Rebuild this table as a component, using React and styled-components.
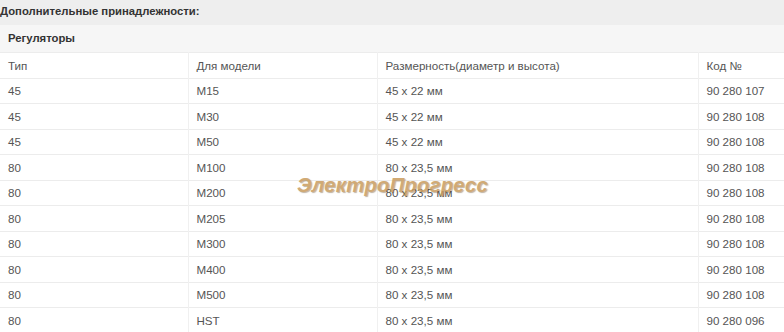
import styled, { createGlobalStyle } from 'styled-components'

const rows = [
  ['45', 'M15', '45 x 22 мм', '90 280 107'],
  ['45', 'M30', '45 x 22 мм', '90 280 108'],
  ['45', 'M50', '45 x 22 мм', '90 280 108'],
  ['80', 'M100', '80 x 23,5 мм', '90 280 108'],
  ['80', 'M200', '80 x 23,5 мм', '90 280 108'],
  ['80', 'M205', '80 x 23,5 мм', '90 280 108'],
  ['80', 'M300', '80 x 23,5 мм', '90 280 108'],
  ['80', 'M400', '80 x 23,5 мм', '90 280 108'],
  ['80', 'M500', '80 x 23,5 мм', '90 280 108'],
  ['80', 'HST', '80 x 23,5 мм', '90 280 096'],
]

export default function App() {
  return (
    <>
      <GlobalStyle />
      <Page>
        <Title>Дополнительные принадлежности:</Title>
        <Table>
          <colgroup>
            <col style={{ width: 188 }} />
            <col style={{ width: 189 }} />
            <col style={{ width: 321 }} />
            <col />
          </colgroup>
          <tbody>
            <GroupRow>
              <td colSpan={4}>Регуляторы</td>
            </GroupRow>
            <Row $height={26}>
              <td>Тип</td>
              <td>Для модели</td>
              <td>Размерность(диаметр и высота)</td>
              <td>Код №</td>
            </Row>
            {rows.map((row, idx) => (
              <Row key={idx} $height={25.5}>
                {row.map((cell, cellIdx) => (
                  <td key={cellIdx}>{cell}</td>
                ))}
              </Row>
            ))}
          </tbody>
        </Table>
        <Watermark>ЭлектроПрогресс</Watermark>
      </Page>
    </>
  )
}

const GlobalStyle = createGlobalStyle`
  body {
    margin: 0;
    background: #fff;
    font-family: "Liberation Sans", Arial, sans-serif;
  }
`

const Page = styled.div`
  position: relative;
  width: 784px;
  height: 332px;
  overflow: hidden;
  font-size: 11.6px;
  color: #555;
`

const Title = styled.div`
  height: 25px;
  line-height: 23px;
  background: #eeeeee;
  font-size: 11.3px;
  font-weight: bold;
  color: #333;
`

const Table = styled.table`
  width: 100%;
  border-collapse: collapse;
  table-layout: fixed;

  td {
    padding: 0 8px;
    vertical-align: middle;
  }
`

const GroupRow = styled.tr`
  height: 27px;
  background: #f6f6f6;

  td {
    font-size: 11.3px;
    font-weight: bold;
    color: #333;
  }
`

const Row = styled.tr`
  height: ${(p) => p.$height}px;
  border-top: 1px solid #ececec;

  td + td {
    border-left: 1px solid #f0f0f0;
  }
`

const Watermark = styled.div`
  position: absolute;
  left: 297px;
  top: 174px;
  font-size: 20.3px;
  font-style: italic;
  font-weight: bold;
  color: #c99c5e;
  text-shadow: 1px 1px 1px rgba(90, 60, 20, 0.45);
  opacity: 0.85;
  letter-spacing: 0.2px;
`
